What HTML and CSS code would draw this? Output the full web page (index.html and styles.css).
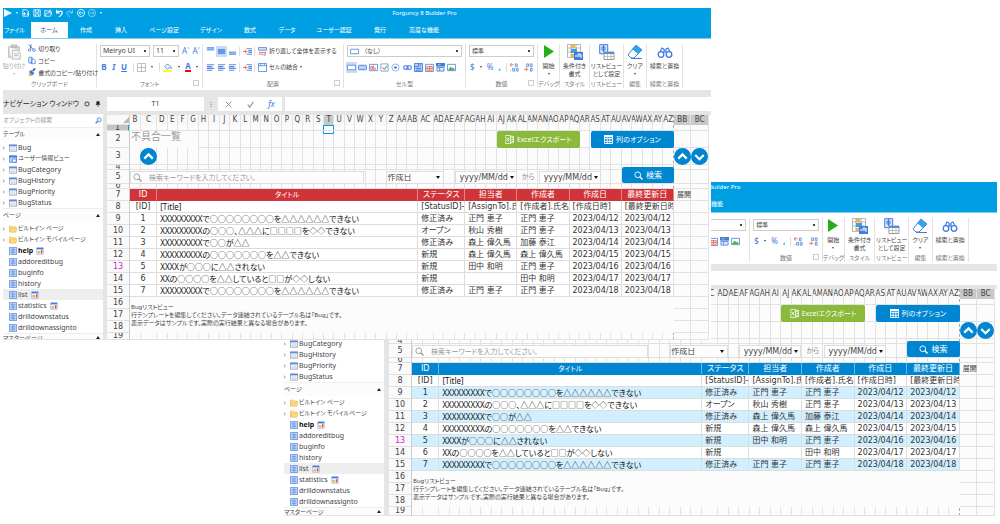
FILE: index.html
```html
<!DOCTYPE html>
<html lang="ja">
<head>
  <meta charset="UTF-8" />
  <meta name="viewport" content="width=device-width, initial-scale=1.0" />
  <title>Forguncy 8 Builder Pro</title>
  <link rel="stylesheet" href="styles.css">
</head>
<body>
  <svg class="sprite" aria-hidden="true">
    <symbol id="i-play" viewBox="0 0 10 10" preserveAspectRatio="none"><path d="M0 0l10 5-10 5z" fill="currentColor"/></symbol>
    <symbol id="i-new" viewBox="0 0 10 10"><path d="M1 1h5l2 2v6H1zM3 4v4M1 6h4M6 5h3M6 7h3" fill="none" stroke="currentColor"/></symbol>
    <symbol id="i-save" viewBox="0 0 10 10"><path d="M1 1h8v8H1zM3 1v3h4V1M3 9V6h4v3" fill="none" stroke="currentColor"/></symbol>
    <symbol id="i-open" viewBox="0 0 10 10"><path d="M1 9V2h3l1 1h4v2M1 9l2-4h7L8 9zM6 2l3-1" fill="none" stroke="currentColor"/></symbol>
    <symbol id="i-undo" viewBox="0 0 10 10"><path d="M2 1v4h4M2 5c2-3 7-3 7 0 0 2-2 3-4 5" fill="none" stroke="currentColor" stroke-width="1.5"/></symbol>
    <symbol id="i-redo" viewBox="0 0 10 10"><path d="M8 1v4H4M8 5C6 2 1 2 1 5c0 2 2 3 4 5" fill="none" stroke="currentColor"/></symbol>
    <symbol id="i-back" viewBox="0 0 10 10"><path d="M5 .5a4.5 4.5 0 100 9 4.500 4.500 0 000-9M8 5H2.500M4.500 3l-2 2 2 2" fill="none" stroke="currentColor"/></symbol>
    <symbol id="i-forward" viewBox="0 0 10 10"><path d="M5 .5a4.500 4.500 0 100 9 4.500 4.500 0 000-9M2 5h5.500M5.500 3l2 2-2 2" fill="none" stroke="currentColor"/></symbol>
    <symbol id="i-paste" viewBox="0 0 14 18"><path d="M1 3h12v5M1 3v12h3M4 4V1h6v3z" fill="#ddd" stroke="#b5b5b5"/><path d="M5 7h6l3 3v7H5z" fill="#f5f5f5" stroke="#b5b5b5"/><path d="M7 11h5M7 13h5" stroke="#bbb"/></symbol>
    <symbol id="i-cut" viewBox="0 0 10 10"><path d="M1 0l5 6M4 0l-1 5" stroke="#2b579a"/><circle cx="2" cy="7" r="1.500" fill="none" stroke="#3f7be0"/><circle cx="7.500" cy="7" r="1.700" fill="none" stroke="#3f7be0"/></symbol>
    <symbol id="i-copy" viewBox="0 0 10 10"><path d="M1 1h4v7H1zM4 3h3l2 2v4H4z" fill="#fff" stroke="#3f7be0"/></symbol>
    <symbol id="i-brush" viewBox="0 0 10 10"><path d="M1 4l3-2 4 4-3 3z" fill="#3f7be0"/><path d="M1 5l4 4-4 1z" fill="#f7b236"/><path d="M6 3l3-3" stroke="#2b579a" stroke-width="2"/></symbol>
    <symbol id="i-border" viewBox="0 0 10 10"><path d="M.5.5h9v9h-9zM5 0v10M0 5h10" fill="none" stroke="#b5b5b5"/></symbol>
    <symbol id="i-fill" viewBox="0 0 10 10"><path d="M2 4l3-3 3 3-3 3z" fill="#fff" stroke="#3f7be0"/><path d="M9 4v3" stroke="#3f7be0"/><path d="M0 8h10v2H0z" fill="#ff0"/></symbol>
    <symbol id="i-top" viewBox="0 0 10 10"><path d="M1 1h8M1 3h8" stroke="#7aa4e8" stroke-width="1.800"/></symbol>
    <symbol id="i-middle" viewBox="0 0 10 10"><path d="M1 3h8M1 5h8M1 7h8" stroke="#5a8de0" stroke-width="1.800"/></symbol>
    <symbol id="i-bottom" viewBox="0 0 10 10"><path d="M1 6h8M1 8h8" stroke="#7aa4e8" stroke-width="1.800"/></symbol>
    <symbol id="i-lines" viewBox="0 0 10 10"><path d="M1 2h8M1 4h6M1 6h8M1 8h6" stroke="#5a8de0" stroke-width="1.200"/></symbol>
    <symbol id="i-indent" viewBox="0 0 10 10"><path d="M4 2h6M6 4h4M6 6h4M4 8h6" stroke="#5a8de0" stroke-width="1.200"/><path d="M0 5h5M3 3v4" stroke="#ef6b4a"/></symbol>
    <symbol id="i-wrap" viewBox="0 0 10 10"><path d="M.5.5h9v3h-9z" fill="#cfe0fa" stroke="#5a8de0"/><path d="M1 6h8M1 8h5" stroke="#ef6b4a"/><path d="M8 6v3H6" fill="none" stroke="#5a8de0"/></symbol>
    <symbol id="i-merge" viewBox="0 0 10 10"><path d="M.5.5h9v9h-9zM0 3h10M3 0v3M7 0v3" fill="#fff" stroke="#5a8de0"/></symbol>
    <symbol id="i-cell" viewBox="0 0 10 10"><path d="M.5 2.500h9v5h-9z" fill="#fff" stroke="#5a8de0"/></symbol>
    <symbol id="i-button" viewBox="0 0 10 10"><rect x=".5" y="2.500" width="9" height="5" rx="1" fill="#b9d2f8" stroke="#3f7be0"/></symbol>
    <symbol id="i-textbox" viewBox="0 0 10 10"><path d="M.5 1.500h9v7h-9z" fill="#fff" stroke="#5a8de0"/><path d="M2 4h2v3H2zM5 3v4h2V5" fill="none" stroke="#ef6b4a"/></symbol>
    <symbol id="i-check" viewBox="0 0 10 10"><path d="M1 1h8v8H1z" fill="#fff" stroke="#7a9fd8"/><path d="M3 5l2 2 3-4" fill="none" stroke="#555"/></symbol>
    <symbol id="i-radio" viewBox="0 0 10 10"><circle cx="5" cy="5" r="4" fill="#fff" stroke="#8aabdf"/><circle cx="5" cy="5" r="1.500" fill="#3f7be0"/></symbol>
    <symbol id="i-link" viewBox="0 0 10 10"><rect x=".7" y="3" width="5" height="4" rx="2" fill="none" stroke="#3f7be0" stroke-width="1.200"/><rect x="4.300" y="3" width="5" height="4" rx="2" fill="none" stroke="#3f7be0" stroke-width="1.200"/></symbol>
    <symbol id="i-combo" viewBox="0 0 10 10"><path d="M.5.5h9v9h-9z" fill="#b9d2f8" stroke="#3f7be0"/><path d="M5 0v4H0M2 6h6M2 8h6M7 1v3" fill="none" stroke="#3f7be0"/></symbol>
    <symbol id="i-calendar" viewBox="0 0 10 10"><path d="M.5 1.500h9v8h-9z" fill="#fff" stroke="#5a8de0"/><path d="M2 4h6v4H2zM5 4v4M2 6h6" fill="none" stroke="#ef6b4a"/></symbol>
    <symbol id="i-tree" viewBox="0 0 10 10"><path d="M0 0h10v4H0z" fill="#3f7be0"/><path d="M2 2h3" stroke="#fc6"/><path d="M1 5h8v4H1zM4 5v4" fill="#dbe8fc" stroke="#5a8de0"/></symbol>
    <symbol id="i-image" viewBox="0 0 10 10"><path d="M.5 1.500h9v7h-9z" fill="#fff" stroke="#5a8de0"/><path d="M1 8l3-4 2 2 1-1 2 3z" fill="#4caf50"/></symbol>
    <symbol id="i-dec-inc" viewBox="0 0 10 10"><path d="M0 2h4M2 0L0 2l2 2" fill="none" stroke="#ef6b4a"/><path d="M6 1h2v3H6zM3 6h2v3H3zM7 6h2v3H7zM1 8v1" fill="none" stroke="#5a8de0"/></symbol>
    <symbol id="i-dec-dec" viewBox="0 0 10 10"><path d="M0 7h4M2 5l2 2-2 2" fill="none" stroke="#ef6b4a"/><path d="M3 1h2v3H3zM7 1h2v3H7zM7 6h2v3H7z" fill="none" stroke="#5a8de0"/></symbol>
    <symbol id="i-style" viewBox="0 0 16 16"><path d="M.5.5h13v13H.5zM.5 4h13M.5 8h13M4 0v13M9 0v13" fill="#fff" stroke="#999" stroke-width=".7"/><path d="M4 1h4v3H4z" fill="#f9b233"/><path d="M4 5h6v4H4z" fill="#36a3e8"/><path d="M4 10h3v3H4z" fill="#f9b233"/><path d="M7 8h9v8H7z" fill="#3f7be0"/><path d="M9 13v-2M11 13v-3h2v3M14 10v4" stroke="#fff" fill="none"/></symbol>
    <symbol id="i-listview" viewBox="0 0 16 16"><path d="M.7.7h8v9h-8z" fill="#dbe8fc" stroke="#3f7be0"/><path d="M3 3h3v3H3zM4.500 1v7" fill="none" stroke="#3f7be0"/><path d="M5 8h10v7.500H5z" fill="#fff" stroke="#999"/><path d="M5 8h10v2H5z" fill="#5a8de0"/><path d="M5 12.500h10M8.500 10v5M12 10v5" stroke="#aaa" stroke-width=".7"/></symbol>
    <symbol id="i-clear" viewBox="0 0 16 16"><path d="M9 1l6 5-8 8H4l-3-3z" fill="#fff" stroke="#3f7be0"/><path d="M9 1l6 5-4 4-6-5z" fill="#36a3e8"/><path d="M4 14.500h11" stroke="#3f7be0"/></symbol>
    <symbol id="i-find" viewBox="0 0 16 16"><path d="M3 8l2-4 2 1v4M13 8l-2-4-2 1v4M7 7h2" fill="none" stroke="#3f7be0" stroke-width="1.200"/><circle cx="4" cy="10.500" r="2.800" fill="#fff" stroke="#3f7be0" stroke-width="1.300"/><circle cx="12" cy="10.500" r="2.800" fill="#fff" stroke="#3f7be0" stroke-width="1.300"/></symbol>
    <symbol id="i-gear" viewBox="0 0 10 10"><circle cx="5" cy="5" r="3" fill="none" stroke="#65717f" stroke-width="2"/><circle cx="5" cy="5" r="4.500" fill="none" stroke="#65717f" stroke-dasharray="1.500 2"/></symbol>
    <symbol id="i-pin" viewBox="0 0 10 10"><path d="M3 1h4v4h1v1H2V5h1zM5 6v4" fill="#222" stroke="#222"/></symbol>
    <symbol id="i-search" viewBox="0 0 10 10"><circle cx="4.200" cy="4.200" r="3.200" fill="none" stroke="currentColor"/><path d="M6.500 6.500L9.500 9.500" stroke="currentColor" stroke-width="1.500"/></symbol>
    <symbol id="i-lens" viewBox="0 0 10 10"><circle cx="6" cy="4" r="3" fill="#dbe8fc" stroke="#4a7fd8"/><path d="M4 6L1 9" stroke="#4a7fd8" stroke-width="2"/></symbol>
    <symbol id="i-table" viewBox="0 0 10 10"><path d="M.5 1h9v8h-9z" fill="#fff" stroke="#8d9db5"/><path d="M0 1h10v2H0z" fill="#5a8de0"/><path d="M1 5h8M1 7h8M3.500 3v6M6.500 3v6" stroke="#b7c3d6" stroke-width=".6"/></symbol>
    <symbol id="i-view" viewBox="0 0 10 10"><path d="M.5 1h9v8h-9z" fill="#c3d7f8" stroke="#3f7be0"/><path d="M0 1h10v2H0z" fill="#3f7be0"/><path d="M4 5h5v4H4z" fill="#fff" stroke="#3f7be0"/></symbol>
    <symbol id="i-folder" viewBox="0 0 10 10"><path d="M.5 8.500v-7h3l1 1h4v2" fill="#ffe9a8" stroke="#e6b84f"/><path d="M.5 9L2 4h8L8.500 9z" fill="#ffd877" stroke="#e6b84f" stroke-width=".7"/></symbol>
    <symbol id="i-page" viewBox="0 0 10 10"><path d="M.5.5h9v9h-9z" fill="#c3d8fa" stroke="#5a8de0"/><path d="M2 3h6M2 5h6M2 7h6M5 1v8" stroke="#5a8de0" stroke-width=".8"/></symbol>
    <symbol id="i-badge" viewBox="0 0 10 10"><path d="M1 1h8v8H1z" fill="#fff" stroke="#8fb3ee"/><path d="M1 1h8v2H1z" fill="#3f7be0"/><path d="M2 5h3v3H2z" fill="#f9b233"/><path d="M6 4h2v4H6z" fill="#e74c3c"/></symbol>
    <symbol id="i-excel" viewBox="0 0 10 10"><path d="M0 1l6-1v10L0 9zM6 1.500h3.500v7H6M7 3h2M7 5h2M7 7h2" fill="none" stroke="#fff" stroke-width=".9"/><path d="M1.500 3l3 4M4.500 3l-3 4" stroke="#fff"/></symbol>
    <symbol id="i-grid" viewBox="0 0 10 10"><path d="M.5.5h9v9h-9zM0 4h10M0 7h10M3.500 3v7M6.500 3v7" fill="none" stroke="#fff"/><path d="M0 0h10v2.500H0z" fill="#fff"/></symbol>
    <symbol id="i-up" viewBox="0 0 16 16"><circle cx="8" cy="8" r="8" fill="#0086d1"/><path d="M4 10l4-4 4 4" fill="none" stroke="#fff" stroke-width="2"/></symbol>
    <symbol id="i-down" viewBox="0 0 16 16"><circle cx="8" cy="8" r="8" fill="#0086d1"/><path d="M4 6.500l4 4 4-4" fill="none" stroke="#fff" stroke-width="2"/></symbol>
    <symbol id="i-no" viewBox="0 0 10 10"><path d="M1 1l8 8M9 1L1 9" stroke="#8a8a8a" stroke-width="1.300"/></symbol>
    <symbol id="i-ok" viewBox="0 0 10 10"><path d="M1 5l3 4 5-8" fill="none" stroke="#8a8a8a" stroke-width="1.500"/></symbol>
  </svg>

  <main class="desktop" id="desktop"></main>

  <template id="windowTemplate">
    <section class="window">
      <header class="titlebar">
        <div class="quick">
          <svg><use href="#i-play"/></svg><i class="arrow"></i>
          <svg><use href="#i-new"/></svg><svg><use href="#i-save"/></svg><svg><use href="#i-open"/></svg>
          <svg><use href="#i-undo"/></svg><svg class="dim"><use href="#i-redo"/></svg>
          <svg><use href="#i-back"/></svg><svg class="dim"><use href="#i-forward"/></svg><i class="arrow"></i>
        </div>
        <div class="app-name">Forguncy 8 Builder Pro</div>
      </header>
      <nav class="tabs">
        <button>ファイル</button><button class="active">ホーム</button><button>作成</button><button>挿入</button>
        <button>ページ設定</button><button>デザイン</button><button>数式</button><button>データ</button>
        <button>ユーザー認証</button><button>発行</button><button>高度な機能</button>
      </nav>

      <div class="ribbon">
        <div class="group">
          <div class="tools clipboard">
            <button class="big off"><svg><use href="#i-paste"/></svg>貼り付け<i class="arrow"></i></button>
            <div class="stack">
              <button><svg><use href="#i-cut"/></svg>切り取り</button>
              <button><svg><use href="#i-copy"/></svg>コピー</button>
              <button><svg><use href="#i-brush"/></svg>書式のコピー/貼り付け</button>
            </div>
          </div>
          <div class="caption">クリップボード</div>
        </div>
        <div class="group launcher">
          <div class="tools two">
            <div class="line">
              <select class="font-name" aria-label="フォント名"><option>Meiryo UI</option></select>
              <select class="font-size" aria-label="フォントサイズ"><option>11</option></select>
              <button class="letter">A˄</button><button class="letter">A˅</button>
            </div>
            <div class="line spread">
              <button class="letter"><b>B</b></button><button class="letter"><b><em>I</em></b></button><button class="letter"><b><u>U</u></b></button>
              <button class="split"><svg><use href="#i-border"/></svg></button><i class="arrow"></i>
              <button class="split"><svg><use href="#i-fill"/></svg></button><i class="arrow"></i>
              <button class="letter font-color"><b>A</b></button><i class="arrow"></i>
            </div>
          </div>
          <div class="caption">フォント</div>
        </div>
        <div class="group launcher">
          <div class="tools two">
            <div class="line align">
              <button><svg><use href="#i-top"/></svg></button><button class="on"><svg><use href="#i-middle"/></svg></button><button><svg><use href="#i-bottom"/></svg></button>
              <button class="split"><svg><use href="#i-indent"/></svg></button><button class="split"><svg><use href="#i-wrap"/></svg>折り返して全体を表示する</button>
            </div>
            <div class="line align">
              <button><svg><use href="#i-lines"/></svg></button><button><svg><use href="#i-lines"/></svg></button><button><svg><use href="#i-lines"/></svg></button>
              <button class="split"><svg><use href="#i-indent"/></svg></button><button class="split"><svg><use href="#i-merge"/></svg>セルの結合<i class="arrow"></i></button>
            </div>
          </div>
          <div class="caption">配置</div>
        </div>
        <div class="group">
          <div class="tools two">
            <div class="line cell-pick">
              <svg><use href="#i-cell"/></svg>
              <select class="wide" aria-label="セル型"><option>（なし）</option></select>
            </div>
            <div class="line cell-types">
              <button class="on"><svg><use href="#i-cell"/></svg></button><button><svg><use href="#i-button"/></svg></button>
              <button><svg><use href="#i-textbox"/></svg></button><button><svg><use href="#i-check"/></svg></button>
              <button><svg><use href="#i-radio"/></svg></button><button><svg><use href="#i-link"/></svg></button>
              <button><svg><use href="#i-combo"/></svg></button><button><svg><use href="#i-calendar"/></svg></button>
              <button><svg><use href="#i-tree"/></svg></button><button><svg><use href="#i-image"/></svg></button>
            </div>
          </div>
          <div class="caption">セル型</div>
        </div>
        <div class="group launcher">
          <div class="tools two">
            <div class="line"><select class="wide" aria-label="表示形式"><option>標準</option></select></div>
            <div class="line spread">
              <button class="letter">$</button><i class="arrow"></i><button class="letter">%</button><button class="letter"><b>,</b></button>
              <button class="split"><svg><use href="#i-dec-inc"/></svg></button><button><svg><use href="#i-dec-dec"/></svg></button>
            </div>
          </div>
          <div class="caption">数値</div>
        </div>
        <div class="group">
          <button class="big run"><svg><use href="#i-play"/></svg>開始<i class="arrow"></i></button>
          <div class="caption">デバッグ</div>
        </div>
        <div class="group">
          <button class="big"><svg><use href="#i-style"/></svg>条件付き<br>書式</button>
          <div class="caption">スタイル</div>
        </div>
        <div class="group">
          <button class="big"><svg><use href="#i-listview"/></svg>リストビュー<br>として設定</button>
          <div class="caption">リストビュー</div>
        </div>
        <div class="group">
          <button class="big"><svg><use href="#i-clear"/></svg>クリア<i class="arrow"></i></button>
          <div class="caption">編集</div>
        </div>
        <div class="group">
          <button class="big"><svg><use href="#i-find"/></svg>検索と置換</button>
          <div class="caption">検索と置換</div>
        </div>
      </div>

      <div class="workspace">
        <aside class="nav">
          <div class="nav-title">ナビゲーション ウィンドウ <svg><use href="#i-gear"/></svg><svg><use href="#i-pin"/></svg></div>
          <label class="nav-search"><input type="text" placeholder="オブジェクトの検索" aria-label="オブジェクトの検索"><svg><use href="#i-lens"/></svg></label>
          <div class="tree"></div>
        </aside>

        <div class="editor">
          <div class="formula-bar">
            <input class="cell-name" type="text" value="T1" aria-label="セル名">
            <span class="dots">⋮</span>
            <div class="formula-buttons"><svg><use href="#i-no"/></svg><svg><use href="#i-ok"/></svg><em>fx</em></div>
            <input class="formula" type="text" aria-label="数式">
          </div>
          <div class="sheet">
            <div class="row-heads"></div>
            <div class="cells">
              <div class="columns"></div>
              <div class="row-lines"></div>
              <div class="content">
                <div class="page-top">
                  <h1>不具合一覧</h1>
                  <button class="cmd green"><svg><use href="#i-excel"/></svg>Excelエクスポート</button>
                  <button class="cmd"><svg><use href="#i-grid"/></svg>列のオプション</button>
                </div>
                <div class="page-fold"><svg class="round"><use href="#i-up"/></svg></div>
                <div class="search-row">
                  <label class="field keyword"><svg><use href="#i-search"/></svg><input type="text" placeholder="検索キーワードを入力してください。" aria-label="キーワード"></label>
                  <label class="field date-kind"><select aria-label="日付の種類"><option>作成日</option></select><i class="arrow"></i></label>
                  <label class="field date"><input type="text" value="yyyy/MM/dd" aria-label="開始日"><i class="arrow"></i></label>
                  <span class="from">から</span>
                  <label class="field date"><input type="text" value="yyyy/MM/dd" aria-label="終了日"><i class="arrow"></i></label>
                  <button class="cmd"><svg><use href="#i-search"/></svg>検索</button>
                </div>
                <table class="bugs">
                  <colgroup><col class="c-id"><col><col class="c-status"><col class="c-data"><col class="c-data"><col class="c-data"><col class="c-data"></colgroup>
                  <thead>
                    <tr><th>ID</th><th class="title">タイトル</th><th>ステータス</th><th>担当者</th><th>作成者</th><th>作成日</th><th>最終更新日</th></tr>
                  </thead>
                  <tbody></tbody>
                </table>
                <div class="note">Bugリストビュー<br>行テンプレートを編集してください。データ連結されているテーブル名は「Bug」です。<br>表示データはサンプルです。実際の実行結果と異なる場合があります。</div>
              </div>
              <div class="side">
                <svg class="round"><use href="#i-up"/></svg><svg class="round"><use href="#i-down"/></svg>
                <span>展開</span>
              </div>
            </div>
          </div>
        </div>
      </div>
    </section>
  </template>

  <script src="script.js"></script>
</body>
</html>
```
FILE: styles.css
```css
* {
  box-sizing: border-box;
}
body {
  margin: 0;
  background: #fff;
  color: #444;
  font-family: "Noto Sans", "Noto Sans CJK JP", sans-serif;
  font-size: 6px;
  line-height: 8px;
  font-feature-settings: "palt";
}
button, input, select {
  margin: 0;
  padding: 0;
  border: none;
  border-radius: 0;
  background: none;
  color: inherit;
  font: inherit;
  font-feature-settings: inherit;
  appearance: none;
  min-width: 0;
}
button {
  white-space: nowrap;
  cursor: pointer;
}
svg {
  width: 9px;
  height: 9px;
  flex: none;
}
.sprite {
  position: absolute;
  width: 0;
  height: 0;
}
.arrow {
  display: inline-block;
  flex: none;
  border: 1px solid transparent;
  border-top: 2px solid currentColor;
  border-bottom: none;
}

/* two overlapping windows */
.desktop {
  position: relative;
  min-height: 100vh;
  overflow: hidden;
}
.window {
  position: absolute;
  top: 8px;
  left: 0.3%;
  width: 70.8%;
  z-index: 2;
  overflow: hidden;
  background: #fff;
  --head: #d13438;
  --stripe: #fff;
  --rows: 6px 17px 17px 5px 14px 5px repeat(12, 12px) 7px;
}
.window.blue {
  top: 182px;
  left: 28.4%;
  width: 71.3%;
  z-index: 1;
  --head: #0086d1;
  --stripe: #d1efff;
  --rows: 6px 17px 17px 5px 14px 5px repeat(12, 12px) 9px;
}

.titlebar {
  position: relative;
  display: flex;
  align-items: center;
  height: 14px;
  padding-bottom: 4px;
  background: #009fe3;
  color: #fff;
}
.quick {
  display: flex;
  align-items: center;
  gap: 3px;
  padding-left: 1px;
}
.quick svg {
  width: 8px;
  height: 8px;
}
.quick .arrow {
  margin: 0 1px;
}
.quick .dim {
  opacity: 0.6;
}
.app-name {
  position: absolute;
  left: 55%;
}
.tabs {
  display: grid;
  grid-template-columns: 23fr 46fr 28fr 42fr 44fr 50fr 28fr 46fr 48fr 44fr 44fr 265fr;
  height: 17px;
  background: #009fe3;
  border-bottom: 1px solid #7fcff1;
  color: #fff;
}
.tabs .active {
  background: #fff;
  color: #2b579a;
  justify-self: center;
  width: 37px;
}

.ribbon {
  display: grid;
  grid-template-columns: 94fr 106fr 141fr 122fr 72fr 22fr 30fr 34fr 23fr 36fr 28fr;
  height: 51px;
  padding: 5px 0 2px;
}
.group {
  position: relative;
  display: flex;
  flex-direction: column;
  justify-content: space-between;
  min-width: 0;
  border-right: 1px solid #e2e2e2;
}
.group:last-child {
  margin-right: 0;
}
.caption {
  text-align: center;
  white-space: nowrap;
  color: #777;
}
.launcher::after {
  content: "";
  position: absolute;
  right: 3px;
  bottom: 2px;
  width: 4px;
  height: 4px;
  border: 1px solid #ccc;
}
.group button {
  display: flex;
  align-items: center;
  gap: 2px;
}
.group .big {
  flex-direction: column;
  gap: 0;
  text-align: center;
}
.big svg {
  width: 16px;
  height: 16px;
  margin-bottom: 2px;
}
.big .arrow {
  margin-top: 3px;
}
.big.run svg {
  width: 10px;
  height: 13px;
  margin: 1px 0 4px;
  color: #27ae16;
}
.off {
  color: #aaa;
}
.clipboard {
  display: flex;
  gap: 3px;
}
.stack {
  display: grid;
  gap: 3px;
}
.stack svg {
  width: 8px;
}
.two {
  display: grid;
  gap: 4px;
  padding: 1px 3px 0;
}
.line {
  display: flex;
  align-items: center;
  gap: 3px;
  height: 12px;
}
.spread {
  justify-content: space-around;
}
.line select, .cell-pick {
  height: 12px;
  border: 1px solid #ccc;
}
.line select {
  background: linear-gradient(#444, #444) no-repeat right 3px center / 2px 2px;
  padding: 0 2px;
}
.font-name {
  width: 50px;
}
.font-name, .font-size {
  font-size: 7px;
}
.font-size {
  width: 26px;
}
.line .wide {
  flex: 1;
}
.cell-pick svg {
  margin-left: 2px;
}
.line.cell-pick select {
  border: none;
  height: 10px;
}
.letter {
  color: #3f7be0;
  font-size: 8px;
}
.group .letter {
  gap: 0;
}
.font-color {
  border-bottom: 2px solid #f00;
  line-height: 8px;
}
.align {
  gap: 2px;
}
.on {
  background: #c8dcf5;
  outline: 1px solid #c8dcf5;
}
.split {
  padding-left: 3px;
  border-left: 1px solid #ddd;
}
.cell-types {
  justify-content: space-between;
  gap: 0;
  padding-right: 6px;
}

.workspace {
  display: grid;
  grid-template-columns: 100px 1fr;
  column-gap: 4px;
  background: #e5e5e5;
  padding-top: 7px;
}
.blue .workspace {
  column-gap: 5px;
}
.nav {
  overflow: hidden;
  font-size: 7px;
  line-height: 11px;
  white-space: nowrap;
}
.nav-title {
  display: flex;
  align-items: center;
  gap: 5px;
  height: 13px;
  color: #222;
}
.nav-title svg {
  width: 6px;
  height: 6px;
}
.nav-search {
  display: flex;
  align-items: center;
  height: 13px;
  margin-top: 4px;
  background: #fff;
}
.nav-search input {
  flex: 1;
  font-size: 6px;
}
.nav-search svg {
  width: 7px;
  height: 7px;
  margin-right: 1px;
}
::placeholder {
  color: #999;
  opacity: 1;
}
.tree {
  background: #fff;
}
.branch {
  display: flex;
  justify-content: space-between;
  align-items: center;
  height: 14px;
  padding-right: 3px;
  border-top: 1px solid #eee;
  font-size: 6px;
  background: #fcfcfc;
}
.branch::after {
  content: "";
  border: 2px solid transparent;
  border-bottom: 3px solid #222;
  border-top: none;
}
.leaves {
  margin: 0;
  padding: 1px 0 0;
  list-style: none;
}
.branch.cut {
  align-items: flex-start;
  height: 6px;
  overflow: hidden;
  line-height: 8px;
}
.branch.cut::after {
  margin-top: 2px;
}
.blue .branch.cut {
  height: 8px;
}
.leaves li {
  display: flex;
  align-items: center;
  gap: 1px;
  height: 11px;
  padding-left: 6px;
}
.leaves .node {
  position: relative;
}
.node::before {
  content: "";
  position: absolute;
  left: 0;
  border: 2px solid transparent;
  border-left: 2px solid #bbb;
  border-right: none;
}
.leaves svg {
  width: 8px;
  height: 8px;
}
.leaves .badge {
  margin-left: 2px;
}
.leaves .jp {
  font-size: 6px;
}
.leaves .current {
  background: #eee;
}
.leaves .bold {
  font-weight: bold;
  color: #111;
}

.formula-bar {
  display: flex;
  align-items: stretch;
  height: 14px;
}
.cell-name {
  width: 97px;
  text-align: center;
  background: #fff;
  font-size: 7px;
}
.dots {
  width: 14px;
  text-align: center;
  line-height: 14px;
}
.formula-buttons {
  display: flex;
  align-items: center;
  justify-content: space-around;
  width: 64px;
  margin-right: 3px;
  background: #fff;
  color: #3f7be0;
  font-size: 8px;
}
.formula-buttons svg {
  width: 7px;
  height: 7px;
}
.formula {
  flex: 1;
  background: #fff;
}

/* sheet: row numbers, then the cells over the grid lines */
.sheet {
  display: grid;
  grid-template-columns: 23px 1fr;
  margin-top: 4px;
  padding-right: 2px;
  background: #fff;
  font-family: "DejaVu Sans", "Noto Sans CJK JP", sans-serif;
  font-size: 8px;
}
.row-heads {
  display: grid;
  grid-template-rows: 10px var(--rows);
  background: #fafafa;
  border-right: 1px solid #ccc;
  text-align: center;
}
.row-heads div {
  display: flex;
  align-items: center;
  justify-content: center;
  min-height: 0;
  overflow: hidden;
  border-bottom: 1px solid #e0e0e0;
}
.row-heads .picked {
  background: #c4c4c4;
  border-right: 1px solid #00a0e9;
}
.row-heads .edited {
  color: #d81bd8;
}
.row-heads .corner::after {
  content: "";
  margin-left: auto;
  border-left: 6px solid transparent;
  border-bottom: 6px solid #bbb;
}
.cells {
  position: relative;
  display: grid;
  grid-template-columns: 543fr 35fr;
  padding-top: 10px;
  background: #fcfcfc;
}
.columns, .row-lines {
  position: absolute;
  inset: 0;
}
.columns {
  display: grid;
  grid-template-columns: 110fr 160fr repeat(25, 104fr) 160fr repeat(23, 104fr) 175fr 175fr;
}
.columns div {
  position: relative;
  min-width: 0;
  border-right: 1px solid #e2e2e2;
}
.columns span {
  display: flex;
  justify-content: center;
  height: 10px;
  overflow: hidden;
  line-height: 10px;
  background: #f8f8f8;
  font-family: "DejaVu Sans Condensed", "DejaVu Sans", sans-serif;
}
.columns .outside span, .columns .selected span {
  background: #c8c8c8;
}
.columns .last {
  border-right: 1px dashed #aaa;
}
.columns .selected::after {
  content: "";
  position: absolute;
  top: 10px;
  left: -1px;
  right: -1px;
  height: 7px;
  border: 1px solid #00a0e9;
  background: #fff;
}
.row-lines {
  display: grid;
  grid-template-rows: var(--rows);
  top: 10px;
}
.row-lines div {
  border-bottom: 1px solid #e2e2e2;
}
.content, .side {
  position: relative;
  min-width: 0;
}
.content {
  padding-top: 6px;
}
.page-top {
  display: flex;
  gap: 2%;
  height: 17px;
}
.page-top h1 {
  width: 68px;
  margin: 0 auto 0 0;
  padding-left: 1px;
  background: #fcfcfc;
  color: #999;
  font-size: 10px;
  line-height: 12px;
  font-weight: normal;
}
.cmd {
  display: flex;
  align-items: center;
  justify-content: center;
  gap: 3px;
  width: 15.3%;
  height: 17px;
  border-radius: 2px;
  background: #0086d1;
  color: #fff;
  font-family: "Noto Sans", "Noto Sans CJK JP", sans-serif;
  font-size: 7px;
}
.green {
  background: #8ab93c;
}
.page-fold {
  height: 17px;
  padding-left: 10px;
}
.round {
  width: 17px;
  height: 17px;
}
.search-row {
  display: grid;
  grid-template-columns: 234fr 22fr 57fr 11fr 62fr 5fr 17fr 62fr 21fr 52fr;
  align-items: end;
  height: 19px;
}
.field {
  display: flex;
  align-items: center;
  min-width: 0;
  height: 13px;
  border: 1px solid #ddd;
  background: #fdfdfd;
}
.field input, .field select {
  flex: 1;
}
.field .arrow {
  border-width: 3px 2px 0;
  color: #111;
}
.keyword {
  gap: 7px;
  padding-left: 2px;
  color: #999;
  font-size: 7px;
}
.date-kind {
  grid-column: 3;
  padding-right: 3px;
}
.date {
  grid-column: 5;
  padding: 0 2px 0 4px;
}
.from {
  grid-column: 7;
  color: #888;
  font-size: 7px;
  line-height: 13px;
}
.from + .date {
  grid-column: 8;
}
.search-row .cmd {
  grid-column: 10;
  width: auto;
  height: 16px;
  font-size: 8px;
  margin-bottom: 1px;
}
.bugs {
  width: 100%;
  margin-top: 5px;
  table-layout: fixed;
  border-spacing: 0;
  background: #fff;
  color: #333;
}
.c-id { width: 5%; }
.c-status { width: 8.6%; }
.c-data { width: 9.6%; }
.bugs th, .bugs td {
  height: 12px;
  padding: 0 0 0 3px;
  border-right: 1px solid #ddd;
  border-bottom: 1px solid #ddd;
  overflow: hidden;
  white-space: nowrap;
  line-height: 11px;
}
.bugs th {
  padding: 0;
  background: var(--head);
  border-color: #ffffff66;
  border-bottom-color: var(--head);
  color: #fff;
  font-weight: normal;
}
.bugs .title {
  font-family: "Noto Sans", "Noto Sans CJK JP", sans-serif;
  color: #111;
}
.bugs th.title {
  color: #fff;
  font-size: 7px;
}
.bugs .id {
  padding: 0;
  text-align: center;
}
.bugs tbody tr:nth-child(even) {
  background: var(--stripe);
}
.note {
  height: 36px;
  padding: 6px 0 0 1px;
  background: #fcfcfc;
  font-family: "Noto Sans", "Noto Sans CJK JP", sans-serif;
  font-size: 6px;
  white-space: nowrap;
}
.side {
  display: grid;
  grid-template-columns: 1fr 1fr;
  grid-template-rows: 17px 12px;
  row-gap: 24px;
  padding-top: 23px;
}
.side span {
  padding-left: 3px;
  line-height: 12px;
  font-size: 7px;
}
```
FILE: script.js
```javascript
const tables = ["Bug", "ユーザー情報ビュー", "BugCategory", "BugHistory", "BugPriority", "BugStatus"];
const pages = ["ビルトイン ページ", "ビルトイン モバイルページ", "help", "addoreditbug", "buginfo", "history", "list", "statistics", "drilldownstatus", "drilldownassignto"];
const badged = ["help", "list", "statistics"];

const bugs = [
  ["[ID]", "[Title]", "[StatusID]-", "[AssignTo].氏名", "[作成者].氏名", "[作成日時]", "[最終更新日時]"],
  [1, "XXXXXXXXXで○○○○○○○○を△△△△△△できない", "修正済み", "正門 恵子", "正門 恵子", "2023/04/12", "2023/04/12"],
  [2, "XXXXXXXXXの○○○、△△△に□□□□を◇◇できない", "オープン", "秋山 秀樹", "正門 恵子", "2023/04/13", "2023/04/13"],
  [3, "XXXXXXXXXで○○が△△", "修正済み", "森上 偉久馬", "加藤 泰江", "2023/04/14", "2023/04/14"],
  [4, "XXXXXXXXXの○○○○○○○を△△できない", "新規", "森上 偉久馬", "森上 偉久馬", "2023/04/15", "2023/04/15"],
  [5, "XXXXが○○○に△△されない", "新規", "田中 和明", "正門 恵子", "2023/04/16", "2023/04/16"],
  [6, "XXの○○○○を△△していると□□が◇◇しない", "新規", "", "田中 和明", "2023/04/17", "2023/04/17"],
  [7, "XXXXXXXXXで○○○○○○○○を△△△△△△できない", "修正済み", "正門 恵子", "正門 恵子", "2023/04/18", "2023/04/18"]
];

function icon(name, cls = "") {
  return `<svg class="${cls}"><use href="#i-${name}"/></svg>`;
}

function tableLeaf(name) {
  const view = name.startsWith("ユーザー");
  return `<li class="node ${view ? "jp" : ""}">${icon(view ? "view" : "table")}${name}</li>`;
}

function pageLeaf(name) {
  if (name.startsWith("ビルトイン")) return `<li class="node jp">${icon("folder")}${name}</li>`;
  const cls = name === "list" ? "current" : name === "help" ? "bold" : "";
  return `<li class="${cls}">${icon("page")}${name}${badged.includes(name) ? icon("badge", "badge") : ""}</li>`;
}

function columnNames() {
  const letters = "ABCDEFGHIJKLMNOPQRSTUVWXYZ".split("");
  return [...letters.slice(1), ...letters.map(l => "A" + l), "BB", "BC"];
}

function columnClass(name) {
  if (name === "T") return "selected";
  if (name === "AZ") return "last";
  return name.startsWith("B") && name.length === 2 ? "outside" : "";
}

function openWindow(theme) {
  const win = document.getElementById("windowTemplate").content.cloneNode(true);
  if (theme) win.querySelector(".window").classList.add(theme);

  win.querySelector(".tree").innerHTML =
    `<div class="branch">テーブル</div><ul class="leaves">${tables.map(tableLeaf).join("")}</ul>` +
    `<div class="branch">ページ</div><ul class="leaves">${pages.map(pageLeaf).join("")}</ul>` +
    `<div class="branch cut">マスターページ</div>`;

  win.querySelector(".columns").innerHTML = columnNames()
    .map(n => `<div class="${columnClass(n)}"><span>${n}</span></div>`).join("");

  let heads = '<div class="corner"></div>';
  let lines = "";
  for (let i = 1; i <= 19; i++) {
    heads += `<div class="${i === 1 ? "picked" : i === 13 ? "edited" : ""}">${i}</div>`;
    lines += "<div></div>";
  }
  win.querySelector(".row-heads").innerHTML = heads;
  win.querySelector(".row-lines").innerHTML = lines;

  win.querySelector(".bugs tbody").innerHTML = bugs.map(row =>
    "<tr>" + row.map((v, i) => `<td class="${["id", "title"][i] || ""}">${v}</td>`).join("") + "</tr>"
  ).join("");

  document.getElementById("desktop").appendChild(win);
}

openWindow();
openWindow("blue");
```
